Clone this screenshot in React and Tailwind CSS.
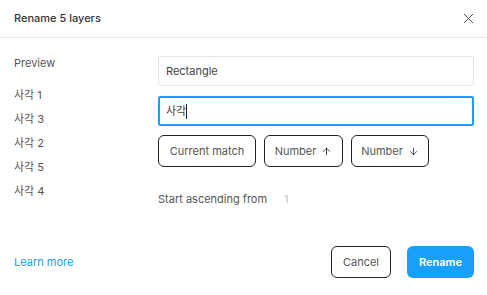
import { X, ArrowUp, ArrowDown } from 'lucide-react'

const PREVIEW = ['사각 1', '사각 3', '사각 2', '사각 5', '사각 4']

export default function App() {
  return (
    <div
      className="w-[487px] h-[295px] bg-white flex flex-col text-[11px] text-[#333]"
      style={{ fontFamily: 'Inter, "Noto Sans CJK KR", sans-serif' }}
    >
      {/* Header */}
      <div className="h-[38px] flex items-center justify-between pl-[14px] pr-[10px] border-b border-[#e6e6e6] shrink-0">
        <span className="font-medium text-[#333]">Rename 5 layers</span>
        <X size={17} strokeWidth={1.2} className="text-[#333]" />
      </div>

      {/* Body */}
      <div className="flex flex-1 pt-[18px] pl-[14px] pr-[13px]">
        <div className="w-[144px] shrink-0 flex flex-col">
          <div className="h-[14px] leading-[14px] text-[#555]">Preview</div>
          <div className="mt-[13px] flex flex-col">
            {PREVIEW.map((name) => (
              <div key={name} className="h-[24px] leading-[24px] text-[#555]">{name}</div>
            ))}
          </div>
        </div>

        <div className="flex-1 flex flex-col">
          <div className="h-[30px] border border-[#e5e5e5] rounded-[2px] flex items-center px-[7px] text-[#444]">
            Rectangle
          </div>
          <div className="mt-[10px] h-[30px] border-2 border-[#18a0fb] rounded-[2px] flex items-center px-[6px] text-[#444]">
            <span>사각</span>
            <span className="w-px h-[15px] bg-[#222]" />
          </div>
          <div className="mt-[9px] flex gap-[8px]">
            <button className="h-[32px] w-[98px] border border-[#222] rounded-[6px] text-[#555]">Current match</button>
            <button className="h-[32px] w-[79px] border border-[#222] rounded-[6px] text-[#555] flex items-center justify-center gap-[5px]">
              Number <ArrowUp size={11} strokeWidth={1.75} className="text-[#222]" />
            </button>
            <button className="h-[32px] w-[78px] border border-[#222] rounded-[6px] text-[#555] flex items-center justify-center gap-[5px]">
              Number <ArrowDown size={11} strokeWidth={1.75} className="text-[#222]" />
            </button>
          </div>
          <div className="mt-[25px] flex items-center h-[14px]">
            <span className="text-[#555]">Start ascending from</span>
            <span className="ml-[17px] text-[#c4c4c4]">1</span>
          </div>
        </div>
      </div>

      {/* Footer */}
      <div className="h-[64px] flex items-center justify-between pl-[14px] pr-[13px] pb-[2px] shrink-0">
        <span className="text-[#18a0fb]">Learn more</span>
        <div className="flex gap-[16px]">
          <button className="h-[32px] w-[60px] border border-[#222] rounded-[6px] text-[#555]">Cancel</button>
          <button className="h-[32px] w-[67px] bg-[#18a0fb] rounded-[6px] text-white font-semibold">Rename</button>
        </div>
      </div>
    </div>
  )
}
